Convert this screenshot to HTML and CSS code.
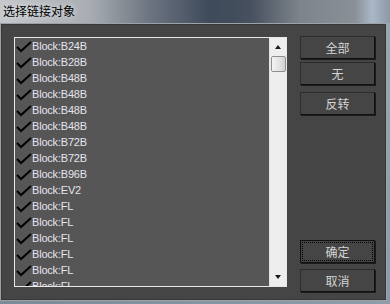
FILE: index.html
```html
<!DOCTYPE html>
<html lang="zh-CN">
<head>
  <meta charset="UTF-8" />
  <title>选择链接对象</title>
  <link rel="stylesheet" href="styles.css">
</head>
<body>

  <div class="titlebar">选择链接对象</div>

  <div class="frame">
    <div class="client">

      <div class="listbox">
        <ul class="items">
          <li><svg class="tick" viewBox="0 0 17 16"><path d="M2 9 L6 13 L16 4"/></svg>Block:B24B</li>
          <li><svg class="tick" viewBox="0 0 17 16"><path d="M2 9 L6 13 L16 4"/></svg>Block:B28B</li>
          <li><svg class="tick" viewBox="0 0 17 16"><path d="M2 9 L6 13 L16 4"/></svg>Block:B48B</li>
          <li><svg class="tick" viewBox="0 0 17 16"><path d="M2 9 L6 13 L16 4"/></svg>Block:B48B</li>
          <li><svg class="tick" viewBox="0 0 17 16"><path d="M2 9 L6 13 L16 4"/></svg>Block:B48B</li>
          <li><svg class="tick" viewBox="0 0 17 16"><path d="M2 9 L6 13 L16 4"/></svg>Block:B48B</li>
          <li><svg class="tick" viewBox="0 0 17 16"><path d="M2 9 L6 13 L16 4"/></svg>Block:B72B</li>
          <li><svg class="tick" viewBox="0 0 17 16"><path d="M2 9 L6 13 L16 4"/></svg>Block:B72B</li>
          <li><svg class="tick" viewBox="0 0 17 16"><path d="M2 9 L6 13 L16 4"/></svg>Block:B96B</li>
          <li><svg class="tick" viewBox="0 0 17 16"><path d="M2 9 L6 13 L16 4"/></svg>Block:EV2</li>
          <li><svg class="tick" viewBox="0 0 17 16"><path d="M2 9 L6 13 L16 4"/></svg>Block:FL</li>
          <li><svg class="tick" viewBox="0 0 17 16"><path d="M2 9 L6 13 L16 4"/></svg>Block:FL</li>
          <li><svg class="tick" viewBox="0 0 17 16"><path d="M2 9 L6 13 L16 4"/></svg>Block:FL</li>
          <li><svg class="tick" viewBox="0 0 17 16"><path d="M2 9 L6 13 L16 4"/></svg>Block:FL</li>
          <li><svg class="tick" viewBox="0 0 17 16"><path d="M2 9 L6 13 L16 4"/></svg>Block:FL</li>
          <li><svg class="tick" viewBox="0 0 17 16"><path d="M2 9 L6 13 L16 4"/></svg>Block:FL</li>
        </ul>
        <div class="scrollbar">
          <span class="arrow up"></span>
          <span class="thumb"></span>
          <span class="arrow down"></span>
        </div>
      </div>

      <div class="buttons">
        <button class="btn">全部</button>
        <button class="btn btn-none">无</button>
        <button class="btn btn-invert">反转</button>
        <button class="btn btn-ok">确定</button>
        <button class="btn btn-cancel">取消</button>
      </div>

    </div>
    <div class="glass-side"></div>
  </div>
  <div class="glass-bottom"></div>

</body>
</html>
```

FILE: styles.css
```css
* {
  box-sizing: border-box;
}

html, body {
  margin: 0;
  padding: 0;
}

body {
  width: 390px;
  height: 304px;
  overflow: hidden;
  font-family: "Noto Sans CJK SC", sans-serif;
  background: #8a96a2;
}

.titlebar {
  height: 23px;
  padding: 2px 0 0 3px;
  font-size: 12px;
  line-height: 17px;
  color: #000;
  text-shadow: 0 0 6px rgba(255,255,255,0.8);
  background: linear-gradient(90deg, #c4c8cc 0px, #a8adb2 90px, #6c7480 150px, #3e4a5a 210px, #46505e 250px, #7e848c 300px, #8a9096 355px, #a9b8c8 372px, #8e98a6 390px);
}

.frame {
  display: flex;
  height: 278px;
}

.client {
  width: 387px;
  height: 278px;
  display: flex;
  padding: 12px 0 0 13px;
  background: #454545;
  border: 1px solid #9ca2a8;
  box-shadow: inset 1px 1px 0 #383838, inset -1px -1px 0 #383838;
}

.glass-side {
  flex: 1;
  background: linear-gradient(180deg, #9aa6b4, #8a9aae);
}

.glass-bottom {
  height: 3px;
  background: linear-gradient(90deg, #7d8a98, #8e9cac);
}

/* list */

.listbox {
  margin-top: 1px;
  width: 273px;
  height: 250px;
  border: 1px solid #e8e8e8;
  background: #565656;
  display: flex;
}

.items {
  flex: 1;
  margin: 0;
  padding: 0;
  list-style: none;
  overflow: hidden;
}

.items li {
  height: 16px;
  display: flex;
  align-items: center;
  font-family: "Liberation Sans", Arial, sans-serif;
  font-size: 11px;
  letter-spacing: -0.2px;
  color: #e4e4f0;
  white-space: nowrap;
}

.tick {
  width: 17px;
  height: 16px;
  flex: none;
}

.tick path {
  fill: none;
  stroke: #000;
  stroke-width: 2;
  stroke-linecap: butt;
  stroke-linejoin: miter;
}

.scrollbar {
  width: 17px;
  background: #eeeeee;
  border-left: 1px solid #e2e2e2;
  display: flex;
  flex-direction: column;
  align-items: center;
}

.arrow {
  width: 0;
  height: 0;
  border-left: 3px solid transparent;
  border-right: 3px solid transparent;
}

.arrow.up {
  margin-top: 7px;
  border-bottom: 4px solid #1a1a1a;
}

.arrow.down {
  margin-top: auto;
  margin-bottom: 7px;
  border-top: 4px solid #1a1a1a;
}

.thumb {
  margin-top: 7px;
  width: 15px;
  height: 16px;
  border: 1px solid #8e8e8e;
  border-radius: 2px;
  background: linear-gradient(90deg, #f4f4f4, #e2e2e2 60%, #cfcfcf);
}

/* buttons */

.buttons {
  margin-left: 13px;
  width: 75px;
  height: 256px;
  display: flex;
  flex-direction: column;
}

.btn {
  height: 23px;
  padding: 0;
  font-family: "Noto Sans CJK SC", sans-serif;
  font-size: 12px;
  color: #d4d4d4;
  background: #454545;
  border: 1px solid #2c2c2c;
  border-right-color: #111;
  border-bottom-color: #111;
  box-shadow: 1px 1px 0 #1c1c1c;
}

.btn-none {
  margin-top: 3px;
}

.btn-invert {
  margin-top: 7px;
}

.btn-ok {
  margin-top: auto;
  border-color: #111;
  outline: 1px dotted #000;
  outline-offset: -3px;
}

.btn-cancel {
  margin-top: 6px;
}
```
